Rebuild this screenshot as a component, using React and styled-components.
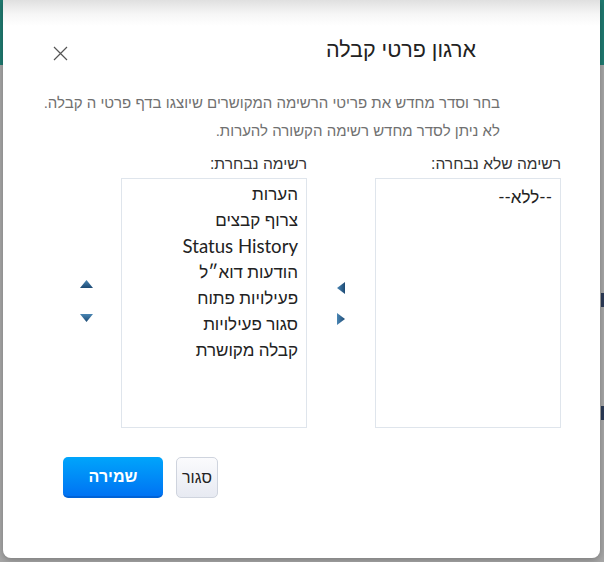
import React from 'react'
import styled, { createGlobalStyle } from 'styled-components'

const GlobalStyle = createGlobalStyle`
  html, body {
    margin: 0;
    padding: 0;
  }
  body {
    font-family: Lato, "Liberation Sans", sans-serif;
  }
`;

const Page = styled.div`
  width: 604px;
  height: 562px;
  position: relative;
  overflow: hidden;
  background: linear-gradient(to bottom, #1f7a70 0, #1f7a70 65px, #a6a6a6 65px, #a6a6a6 100%);
`;

const Peek = styled.div`
  position: absolute;
  right: 0;
  top: ${p => p.top}px;
  width: 3px;
  height: 14px;
  background: #2b3a55;
`;

const Modal = styled.div`
  position: absolute;
  left: 3px;
  top: 0;
  width: 597px;
  height: 558px;
  box-sizing: border-box;
  border-radius: 0 0 8px 8px;
  background: linear-gradient(to bottom, #e0e0e0 0, #f6f6f6 14px, #fff 26px);
  box-shadow: 0 2px 6px rgba(0, 0, 0, 0.25);
  direction: rtl;
  display: flex;
  flex-direction: column;
  padding: 35px 0 0 0;
`;

const Header = styled.div`
  display: flex;
  align-items: center;
  justify-content: space-between;
  padding: 0 124px 0 50px;
  height: 30px;
`;

const Title = styled.h2`
  margin: 0;
  font-family: "Liberation Sans", sans-serif;
  font-size: 21.5px;
  font-weight: 400;
  line-height: 30px;
  color: #222;
`;

const CloseButton = styled.button`
  width: 15px;
  height: 15px;
  padding: 0;
  border: 0;
  background: none;
  display: flex;
  margin-top: 7px;
  cursor: pointer;
`;

const Description = styled.p`
  margin: 24px 100px 0 0;
  font-family: "Liberation Sans", sans-serif;
  font-size: 15px;
  line-height: 28px;
  color: #707070;
`;

const Lists = styled.div`
  display: flex;
  margin: 8px 39px 0 0;
`;

const Column = styled.div`
  display: flex;
  flex-direction: column;
  width: 186px;
`;

const Label = styled.div`
  font-family: "Liberation Sans", sans-serif;
  font-size: 15.6px;
  line-height: 22px;
  color: #333;
  margin-bottom: 3px;
`;

const ListBox = styled.ul`
  list-style: none;
  margin: 0;
  height: 250px;
  box-sizing: border-box;
  border: 1px solid #dfe5ec;
  padding: ${p => (p.empty ? '5px 8px' : '2px 8px')};
  font-size: 17px;
  line-height: 26px;
  color: #222;
`;

const Item = styled.li`
  white-space: nowrap;
  font-size: ${p => (p.latin ? '18.6px' : '17px')};
`;

const ArrowColumn = styled.div`
  width: ${p => p.width}px;
  padding-top: ${p => p.offset}px;
  display: flex;
  flex-direction: column;
  align-items: center;
  justify-content: center;
  gap: ${p => p.gap}px;
`;

const ArrowButton = styled.button`
  border: 0;
  padding: 0;
  background: none;
  display: flex;
  cursor: pointer;
`;

const Footer = styled.div`
  display: flex;
  justify-content: flex-end;
  gap: 13px;
  margin: 29px 0 0 0;
  padding-left: 60px;
`;

const SaveButton = styled.button`
  width: 100px;
  height: 41px;
  border: 0;
  border-bottom: 2px solid #0062d6;
  border-radius: 5px;
  background: linear-gradient(to bottom, #00a5fb, #0073f3);
  color: #fff;
  font-family: "Liberation Sans", sans-serif;
  font-size: 16px;
  font-weight: 700;
  cursor: pointer;
`;

const PlainButton = styled.button`
  width: 42px;
  height: 41px;
  padding: 0;
  border: 1px solid #cfd4de;
  border-radius: 5px;
  background: linear-gradient(to bottom, #fbfbfd, #e7eaf2);
  color: #222;
  font-family: "Liberation Sans", sans-serif;
  font-size: 16px;
  cursor: pointer;
`;

const Arrow = ({ dir }) => {
  const shapes = {
    up: { w: 13, h: 8, d: 'M6.5 0 L13 8 L0 8 Z' },
    down: { w: 13, h: 8, d: 'M0 0 L13 0 L6.5 8 Z' },
    left: { w: 8, h: 12, d: 'M8 0 L8 12 L0 6 Z' },
    right: { w: 8, h: 12, d: 'M0 0 L8 6 L0 12 Z' },
  };
  const s = shapes[dir];
  const id = `g-${dir}`;
  const vertical = dir === 'up' || dir === 'down';
  return (
    <svg width={s.w} height={s.h} viewBox={`0 0 ${s.w} ${s.h}`}>
      <defs>
        <linearGradient id={id} x1="0" y1="0" x2={vertical ? 0 : 1} y2={vertical ? 1 : 0}>
          <stop offset="0" stopColor="#4a86b4" />
          <stop offset="1" stopColor="#1d4a74" />
        </linearGradient>
      </defs>
      <path d={s.d} fill={`url(#${id})`} />
    </svg>
  );
};

const selected = [
  'הערות',
  'צרוף קבצים',
  'Status History',
  'הודעות דוא״ל',
  'פעילויות פתוח',
  'סגור פעילויות',
  'קבלה מקושרת',
];

export default function App() {
  return (
    <>
      <GlobalStyle />
      <Page>
        <Peek top={293} />
        <Peek top={406} />
        <Modal>
          <Header>
            <Title>ארגון פרטי קבלה</Title>
            <CloseButton aria-label="סגור">
              <svg width="15" height="15" viewBox="0 0 15 15">
                <path d="M1 1 L14 14 M14 1 L1 14" stroke="#555" strokeWidth="1.2" />
              </svg>
            </CloseButton>
          </Header>
          <Description>
            בחר וסדר מחדש את פריטי הרשימה המקושרים שיוצגו בדף פרטי ה קבלה.
            <br />
            לא ניתן לסדר מחדש רשימה הקשורה להערות.
          </Description>
          <Lists>
            <Column>
              <Label>רשימה שלא נבחרה:</Label>
              <ListBox empty>
                <Item>--ללא--</Item>
              </ListBox>
            </Column>
            <ArrowColumn width={68} gap={19} offset={25}>
              <ArrowButton><Arrow dir="left" /></ArrowButton>
              <ArrowButton><Arrow dir="right" /></ArrowButton>
            </ArrowColumn>
            <Column>
              <Label>רשימה נבחרת:</Label>
              <ListBox>
                {selected.map(item => (
                  <Item key={item} latin={/^[A-Za-z]/.test(item)}>{item}</Item>
                ))}
              </ListBox>
            </Column>
            <ArrowColumn width={70} gap={26} offset={21}>
              <ArrowButton><Arrow dir="up" /></ArrowButton>
              <ArrowButton><Arrow dir="down" /></ArrowButton>
            </ArrowColumn>
          </Lists>
          <Footer>
            <PlainButton>סגור</PlainButton>
            <SaveButton>שמירה</SaveButton>
          </Footer>
        </Modal>
      </Page>
    </>
  );
}
